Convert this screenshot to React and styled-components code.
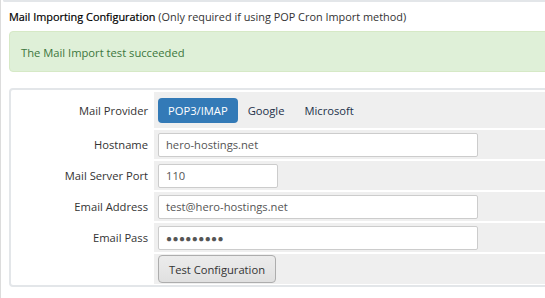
import React from "react";
import styled, { createGlobalStyle } from "styled-components";

const Global = createGlobalStyle`
  html, body { margin: 0; padding: 0; background: #fff; overflow: hidden; }
  body { font-family: "Open Sans", "Liberation Sans", sans-serif; font-size: 11.2px; color: #333; }
`;

const Page = styled.div`
  width: 545px;
  height: 298px;
  box-sizing: border-box;
  border-left: 1px solid #dcdcdc;
  padding-left: 2px;
  overflow: hidden;
`;

const PrevPanel = styled.div`
  width: 700px;
  height: 0;
  border: 2px solid #e3e6e9;
  border-top: none;
  border-radius: 0 0 0 4px;
`;

const Inner = styled.div`
  margin-left: 6px;
  width: 700px;
`;

const Title = styled.div`
  margin-top: 6px;
  line-height: 17px;
  font-size: 10.9px;
  color: #333;
  white-space: nowrap;
`;

const TitleStrong = styled.span`
  color: #000;
  font-weight: 500;
  -webkit-text-stroke: 0.2px #000;
`;

const Alert = styled.div`
  margin-top: 6px;
  border: 1px solid #d6e9c6;
  background: #dff0d8;
  color: #3c763d;
  border-radius: 4px;
  padding: 12px 11px 10px;
  line-height: 17px;
`;

const Panel = styled.div`
  margin-top: 16px;
  border: 2px solid #e3e6e9;
  border-radius: 4px;
  padding: 2px;
  display: grid;
  grid-template-columns: 139px 1fr;
  grid-auto-rows: 29px;
  grid-template-rows: 36px;
  gap: 2px;
`;

const Label = styled.div`
  display: flex;
  align-items: center;
  justify-content: flex-end;
  padding-right: 4px;
  background: #fff;
  white-space: nowrap;
  color: #333;
`;

const Field = styled.div`
  display: flex;
  align-items: center;
  background: #efefef;
  padding-left: 4px;
  gap: 0;
`;

const Tab = styled.div`
  height: 25px;
  padding: 0 10px;
  display: flex;
  align-items: center;
  border-radius: 4px;
  background: ${(p) => (p.$active ? "#337ab7" : "transparent")};
  color: ${(p) => (p.$active ? "#fff" : "#23314a")};
`;

const Input = styled.div`
  box-sizing: border-box;
  width: ${(p) => p.$w}px;
  height: 24px;
  border: 1px solid #ccc;
  border-radius: 2px;
  background: #fff;
  padding-left: 7px;
  display: flex;
  align-items: center;
  color: #555;
  white-space: nowrap;
`;

const Dots = styled.span`
  font-size: 10px;
  letter-spacing: 0.4px;
  color: #555;
`;

const Button = styled.div`
  box-sizing: border-box;
  height: 28px;
  padding: 0 10px;
  display: flex;
  align-items: center;
  border: 1px solid #adadad;
  border-radius: 4px;
  background: linear-gradient(#ececec, #e0e0e0);
  color: #333;
  white-space: nowrap;
`;

const ButtonRowField = styled(Field)`
  height: 30px;
`;

export default function App() {
  return (
    <>
      <Global />
      <Page>
        <PrevPanel />
        <Inner>
          <Title>
            <TitleStrong>Mail Importing Configuration</TitleStrong> (Only required if using POP Cron Import method)
          </Title>
          <Alert>The Mail Import test succeeded</Alert>
          <Panel>
            <Label>Mail Provider</Label>
            <Field>
              <Tab $active>POP3/IMAP</Tab>
              <Tab>Google</Tab>
              <Tab>Microsoft</Tab>
            </Field>
            <Label>Hostname</Label>
            <Field>
              <Input $w={320}>hero-hostings.net</Input>
            </Field>
            <Label>Mail Server Port</Label>
            <Field>
              <Input $w={120}>110</Input>
            </Field>
            <Label>Email Address</Label>
            <Field>
              <Input $w={320}>test@hero-hostings.net</Input>
            </Field>
            <Label>Email Pass</Label>
            <Field>
              <Input $w={320}>
                <Dots>●●●●●●●●●</Dots>
              </Input>
            </Field>
            <Label />
            <ButtonRowField>
              <Button>Test Configuration</Button>
            </ButtonRowField>
          </Panel>
        </Inner>
      </Page>
    </>
  );
}
